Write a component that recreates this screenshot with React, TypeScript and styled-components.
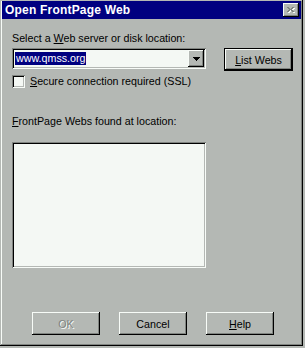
import styled, { createGlobalStyle } from "styled-components"

const FACE = "#b4b8b4"
const SHADOW = "#808480"
const LIGHT = "#f8fcf8"
const FIELD = "#f4f8f4"

const GlobalStyle = createGlobalStyle`
  html, body {
    margin: 0;
    padding: 0;
    background: ${FACE};
  }
  body {
    font-family: "Liberation Sans", Arial, sans-serif;
    font-size: 10.7px;
    color: #000;
  }
`

const raised = `
  box-shadow: inset -1px -1px #000, inset 1px 1px ${LIGHT}, inset -2px -2px ${SHADOW}, inset 2px 2px ${FACE};
`

const sunken = `
  box-shadow: inset 1px 1px ${SHADOW}, inset -1px -1px ${LIGHT}, inset 2px 2px #000, inset -2px -2px ${FACE};
`

const App = () => {
  return (
    <>
      <GlobalStyle />
      <Window>
        <TitleBar>
          <Title>Open FrontPage Web</Title>
          <CloseButton aria-label="Close">
            <svg width="8" height="7" viewBox="0 0 8 7" shapeRendering="crispEdges">
              <path d="M1 1h2v1h1v1h1v-1h1v-1h2v1h-1v1h-1v1h1v1h1v1h-2v-1h-1v-1h-1v1h-1v1h-2v-1h1v-1h1v-1h-1v-1h-1z" fill={LIGHT} />
              <path d="M0 0h2v1h1v1h1v-1h1v-1h2v1h-1v1h-1v1h1v1h1v1h-2v-1h-1v-1h-1v1h-1v1h-2v-1h1v-1h1v-1h-1v-1h-1z" fill={SHADOW} />
            </svg>
          </CloseButton>
        </TitleBar>

        <Body>
          <Label>
            Select a <u>W</u>eb server or disk location:
          </Label>

          <TopRow>
            <ComboBox>
              <ComboText>
                <Selected>www.qmss.org</Selected>
              </ComboText>
              <DropButton>
                <svg width="7" height="4" viewBox="0 0 7 4" shapeRendering="crispEdges">
                  <path d="M0 0h7v1h-1v1h-1v1h-1v1h-1v-1h-1v-1h-1v-1h-1z" fill="#000" />
                </svg>
              </DropButton>
            </ComboBox>
            <DefaultButton>
              <Button $width={67} $height={21}>
                <u>L</u>ist Webs
              </Button>
            </DefaultButton>
          </TopRow>

          <CheckRow>
            <CheckBox />
            <span>
              <u>S</u>ecure connection required (SSL)
            </span>
          </CheckRow>

          <ListLabel>
            <u>F</u>rontPage Webs found at location:
          </ListLabel>

          <ListBox />

          <ButtonRow>
            <Button $width={68} $height={23} $disabled>
              OK
            </Button>
            <Button $width={68} $height={23}>
              Cancel
            </Button>
            <Button $width={68} $height={23}>
              <u>H</u>elp
            </Button>
          </ButtonRow>
        </Body>
      </Window>
    </>
  )
}

export default App

/* STYLED COMPONENTS */
const Window = styled.div`
  width: 303px;
  height: 346px;
  box-sizing: border-box;
  padding: 1px 2px 2px 2px;
  background: ${FACE};
  box-shadow: inset -1px -1px #000, inset 1px 1px ${FACE}, inset -2px -2px ${SHADOW}, inset 2px 2px ${LIGHT};
  display: flex;
  flex-direction: column;
`

const TitleBar = styled.div`
  height: 18px;
  background: #000080;
  display: flex;
  align-items: center;
  justify-content: space-between;
  padding: 0 2px 0 3px;
`

const Title = styled.span`
  color: #fff;
  font-weight: bold;
  font-size: 12px;
  letter-spacing: 0.2px;
`

const CloseButton = styled.div`
  width: 16px;
  height: 14px;
  background: ${FACE};
  ${raised}
  display: flex;
  align-items: center;
  justify-content: center;
  padding-top: 1px;
  box-sizing: border-box;
`

const Body = styled.div`
  flex: 1;
  display: flex;
  flex-direction: column;
  padding: 0 0 0 10px;
`

const Label = styled.div`
  margin-top: 13px;
  line-height: 13px;
  height: 13px;
`

const TopRow = styled.div`
  margin-top: 3px;
  display: flex;
  align-items: flex-start;
`

const ComboBox = styled.div`
  width: 194px;
  height: 21px;
  box-sizing: border-box;
  background: ${FIELD};
  ${sunken}
  display: flex;
  align-items: stretch;
  padding: 2px;
`

const ComboText = styled.div`
  flex: 1;
  display: flex;
  align-items: center;
  padding-left: 1px;
`

const Selected = styled.span`
  background: #000080;
  color: #fff;
  line-height: 13px;
  padding: 0 1px;
`

const DropButton = styled.div`
  width: 16px;
  background: ${FACE};
  ${raised}
  display: flex;
  align-items: center;
  justify-content: center;
`

const DefaultButton = styled.div`
  margin-left: 18px;
  border: 1px solid #000;
  display: flex;
`

const Button = styled.div<{ $width: number; $height: number; $disabled?: boolean }>`
  width: ${(p) => p.$width}px;
  height: ${(p) => p.$height}px;
  box-sizing: border-box;
  background: ${FACE};
  ${raised}
  display: flex;
  align-items: center;
  justify-content: center;
  color: ${(p) => (p.$disabled ? SHADOW : "#000")};
  text-shadow: ${(p) => (p.$disabled ? `1px 1px ${LIGHT}` : "none")};
`

const CheckRow = styled.div`
  margin-top: 4px;
  display: flex;
  align-items: center;
  gap: 5px;
  line-height: 13px;
`

const CheckBox = styled.div`
  width: 13px;
  height: 13px;
  box-sizing: border-box;
  background: ${FIELD};
  ${sunken}
`

const ListLabel = styled.div`
  margin-top: 27px;
  line-height: 13px;
  height: 13px;
`

const ListBox = styled.div`
  margin-top: 14px;
  width: 194px;
  height: 126px;
  box-sizing: border-box;
  background: ${FIELD};
  ${sunken}
`

const ButtonRow = styled.div`
  margin-top: 44px;
  padding-left: 20px;
  display: flex;
  gap: 19px;
`
